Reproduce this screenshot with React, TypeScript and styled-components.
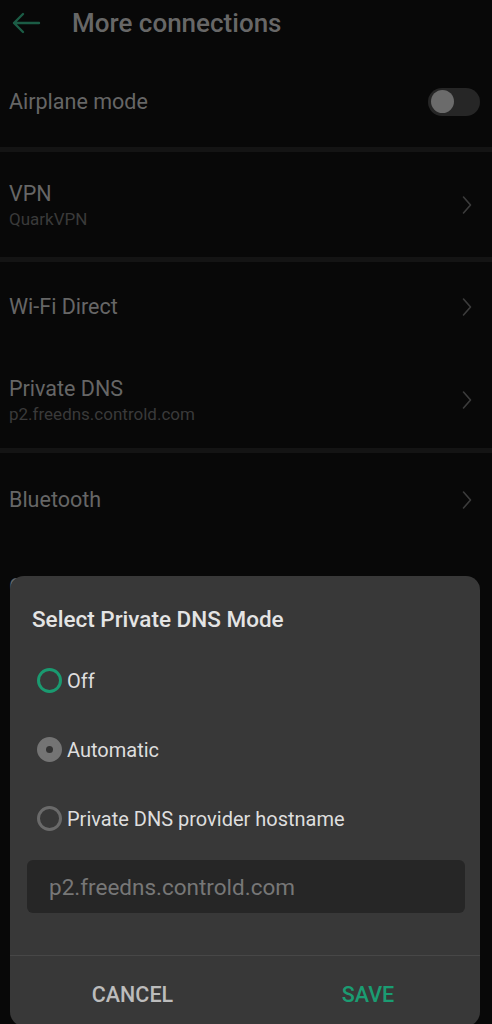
import React from "react";
import styled, { createGlobalStyle } from "styled-components";

const Global = createGlobalStyle`
  html, body { margin: 0; padding: 0; background: #080808; }
  body { font-family: Roboto, "Noto Sans", Arial, sans-serif; }
  #root { position: relative; width: 492px; height: 1024px; overflow: hidden; }
`;

const Screen = styled.div`
  position: relative;
  width: 492px;
  height: 1024px;
  background: #080808;
  overflow: hidden;
`;

const Header = styled.header`
  height: 46px;
  display: flex;
  align-items: center;
  padding-left: 11px;
  gap: 31px;
`;

const Title = styled.h1`
  margin: 0;
  font-size: 26px;
  font-weight: 500;
  color: #676767;
`;

const Section = styled.section<{ $padTop?: number }>`
  display: flex;
  flex-direction: column;
  padding-top: ${(p) => p.$padTop ?? 0}px;
`;

const Band = styled.div`
  height: 5px;
  background: #141414;
`;

const Row = styled.div<{ $h: number }>`
  height: ${(p) => p.$h}px;
  display: flex;
  align-items: center;
  justify-content: space-between;
  padding: 0 19px 0 9px;
`;

const TextCol = styled.div`
  display: flex;
  flex-direction: column;
`;

const RowTitle = styled.div`
  font-size: 21.5px;
  line-height: 28px;
  color: #666;
`;

const RowSub = styled.div`
  font-size: 17px;
  line-height: 22px;
  color: #3a3a3a;
`;

const Toggle = styled.div`
  width: 52px;
  height: 28px;
  border-radius: 14px;
  background: #262626;
  display: flex;
  align-items: center;
  padding-left: 3px;
  box-sizing: border-box;
  margin-right: -7px;
`;

const Knob = styled.div`
  width: 23px;
  height: 23px;
  border-radius: 50%;
  background: #6b6b6b;
`;

const Chevron = () => (
  <svg width="12" height="20" viewBox="0 0 12 20">
    <path d="M2.5 2 L9.5 10 L2.5 18" fill="none" stroke="#3c3c3c" strokeWidth="1.6" strokeLinecap="round" strokeLinejoin="round" />
  </svg>
);

const BackArrow = () => (
  <svg width="30" height="24" viewBox="0 0 30 24">
    <path d="M28 12 H3 M12 3 L3 12 L12 21" fill="none" stroke="#1b5c45" strokeWidth="2.4" strokeLinecap="round" strokeLinejoin="round" />
  </svg>
);

const Dialog = styled.div`
  position: absolute;
  left: 10px;
  top: 576px;
  width: 470px;
  height: 450px;
  background: #383838;
  border-radius: 14px;
  display: flex;
  flex-direction: column;
`;

const DialogTitle = styled.h2`
  margin: 0;
  box-sizing: border-box;
  height: 70px;
  padding: 29px 0 0 22px;
  line-height: 28px;
  font-size: 22.5px;
  font-weight: 500;
  color: #e4e4e4;
`;

const Options = styled.div`
  display: flex;
  flex-direction: column;
  padding-left: 27px;
`;

const Option = styled.div`
  height: 69px;
  display: flex;
  align-items: center;
  gap: 5px;
  font-size: 20px;
  color: #dedede;
`;

const Radio = styled.span<{ $kind: "green" | "filled" | "empty" }>`
  width: 25px;
  height: 25px;
  border-radius: 50%;
  box-sizing: border-box;
  display: flex;
  align-items: center;
  justify-content: center;
  border: 3px solid ${(p) => (p.$kind === "green" ? "#1a9a70" : p.$kind === "filled" ? "#747474" : "#6a6a6a")};
  background: ${(p) => (p.$kind === "filled" ? "#747474" : "transparent")};
  &::after {
    content: "";
    display: ${(p) => (p.$kind === "filled" ? "block" : "none")};
    width: 7px;
    height: 7px;
    border-radius: 50%;
    background: #333;
  }
`;

const InputBox = styled.div`
  margin: 7px 15px 0 17px;
  height: 53px;
  border-radius: 6px;
  background: #262626;
  display: flex;
  align-items: center;
  padding-left: 22px;
  font-size: 22.5px;
  color: #777;
`;

const Divider = styled.div`
  margin-top: 42px;
  height: 1px;
  background: #474747;
`;

const Buttons = styled.div`
  display: grid;
  grid-template-columns: 1fr 1fr;
  padding-top: 27px;
`;

const DlgButton = styled.div<{ $primary?: boolean }>`
  text-align: center;
  font-size: 21.5px;
  font-weight: 500;
  line-height: 24px;
  color: ${(p) => (p.$primary ? "#1b9c72" : "#bcbcbc")};
  padding-left: ${(p) => (p.$primary ? "11px" : "10px")};
`;

export default function App() {
  return (
    <Screen>
      <Global />
      <Header>
        <BackArrow />
        <Title>More connections</Title>
      </Header>
      <Section $padTop={10}>
        <Row $h={91}>
          <RowTitle>Airplane mode</RowTitle>
          <Toggle>
            <Knob />
          </Toggle>
        </Row>
      </Section>
      <Band />
      <Section>
        <Row $h={105}>
          <TextCol>
            <RowTitle>VPN</RowTitle>
            <RowSub>QuarkVPN</RowSub>
          </TextCol>
          <Chevron />
        </Row>
      </Section>
      <Band />
      <Section>
        <Row $h={90}>
          <RowTitle>Wi-Fi Direct</RowTitle>
          <Chevron />
        </Row>
        <Row $h={96}>
          <TextCol>
            <RowTitle>Private DNS</RowTitle>
            <RowSub>p2.freedns.controld.com</RowSub>
          </TextCol>
          <Chevron />
        </Row>
      </Section>
      <Band />
      <Section>
        <Row $h={94}>
          <RowTitle>Bluetooth</RowTitle>
          <Chevron />
        </Row>
        <Row $h={80}>
          <RowTitle>Casting</RowTitle>
          <Chevron />
        </Row>
      </Section>

      <Dialog>
        <DialogTitle>Select Private DNS Mode</DialogTitle>
        <Options>
          <Option>
            <Radio $kind="green" />
            Off
          </Option>
          <Option>
            <Radio $kind="filled" />
            Automatic
          </Option>
          <Option>
            <Radio $kind="empty" />
            Private DNS provider hostname
          </Option>
        </Options>
        <InputBox>p2.freedns.controld.com</InputBox>
        <Divider />
        <Buttons>
          <DlgButton>CANCEL</DlgButton>
          <DlgButton $primary>SAVE</DlgButton>
        </Buttons>
      </Dialog>
    </Screen>
  );
}
